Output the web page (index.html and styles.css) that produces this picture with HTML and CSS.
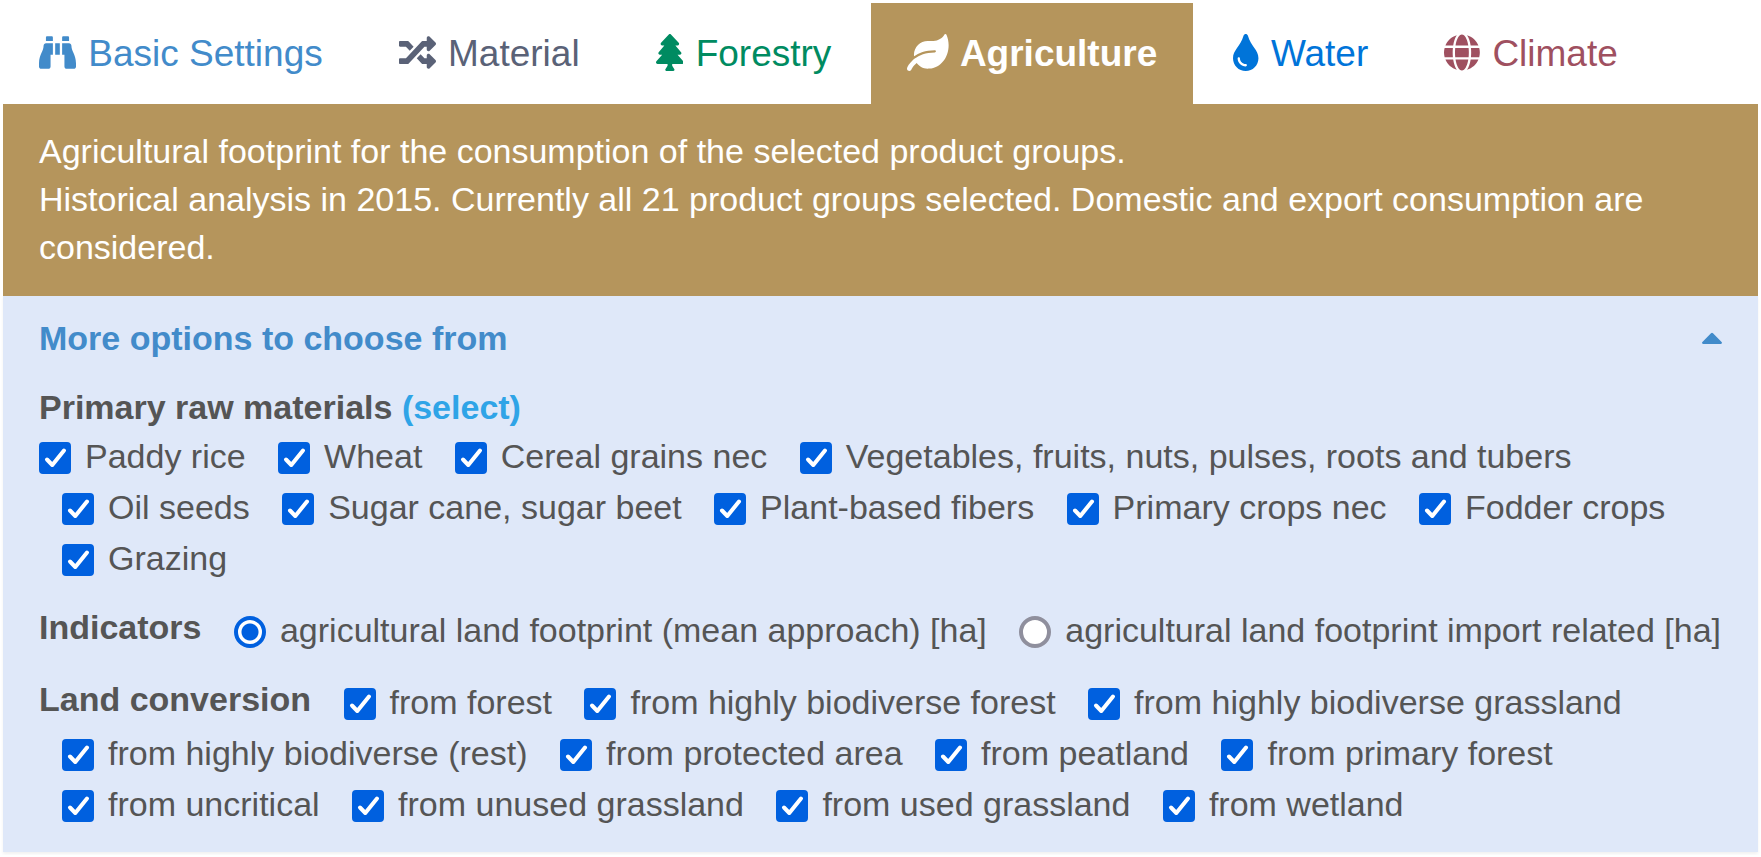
FILE: index.html
```html
<!DOCTYPE html>
<html lang="en">
<head>
<meta charset="utf-8">
<title>Agriculture footprint</title>
<link rel="stylesheet" href="styles.css">
</head>
<body>
<main class="card">
  <nav class="tabs" aria-label="Footprint categories">
    <a class="tab tab-basic" href="#basic"><svg class="icon" viewBox="0 0 512 512" aria-hidden="true"><path d="M416 48c0-8.84-7.16-16-16-16h-64c-8.84 0-16 7.16-16 16v48h96V48zM63.91 159.99C61.4 253.84 3.46 274.22 0 404v44c0 17.67 14.33 32 32 32h96c17.67 0 32-14.33 32-32V288h32V128H95.84c-17.63 0-31.45 14.37-31.93 31.99zm384.18 0c-.48-17.62-14.3-31.99-31.93-31.99H320v160h32v160c0 17.67 14.33 32 32 32h96c17.67 0 32-14.33 32-32v-44c-3.46-129.78-61.4-150.16-63.91-244.01zM176 32h-64c-8.84 0-16 7.16-16 16v48h96V48c0-8.84-7.16-16-16-16zm48 256h64V128h-64v160z"/></svg> Basic Settings</a>
    <a class="tab tab-material" href="#material"><svg class="icon" viewBox="0 0 512 512" aria-hidden="true"><path d="M504.971 359.029c9.373 9.373 9.373 24.569 0 33.941l-80 79.984c-15.01 15.01-40.971 4.49-40.971-16.971V416h-58.785a12.004 12.004 0 0 1-8.773-3.812l-70.556-75.596 53.333-57.143L352 336h32v-39.981c0-21.438 25.943-31.998 40.971-16.971l80 79.981zM12 176h84l52.781 56.551 53.333-57.143-70.556-75.596A11.999 11.999 0 0 0 122.785 96H12c-6.627 0-12 5.373-12 12v56c0 6.627 5.373 12 12 12zm372 0v39.984c0 21.46 25.961 31.98 40.971 16.971l80-79.984c9.373-9.373 9.373-24.569 0-33.941l-80-79.981C409.943 24.021 384 34.582 384 56.019V96h-58.785a12.004 12.004 0 0 0-8.773 3.812L96 336H12c-6.627 0-12 5.373-12 12v56c0 6.627 5.373 12 12 12h110.785c3.326 0 6.503-1.381 8.773-3.812L352 176h32z"/></svg> Material</a>
    <a class="tab tab-forestry" href="#forestry"><svg class="icon" viewBox="0 0 384 512" aria-hidden="true"><path d="M378.31 378.49L298.42 288h30.63c9.01 0 16.98-5 20.78-13.06 3.8-8.04 2.55-17.26-3.28-24.05L268.42 160h28.89c9.1 0 17.3-5.35 20.86-13.61 3.52-8.13 1.86-17.59-4.24-24.08L203.66 4.83c-6.03-6.45-17.28-6.45-23.32 0L70.06 122.31c-6.1 6.49-7.75 15.95-4.24 24.08C69.38 154.65 77.59 160 86.69 160h28.89l-78.14 90.91c-5.81 6.78-7.06 15.99-3.27 24.04C37.97 283 45.93 288 54.95 288h30.63L5.69 378.49c-6 6.79-7.36 16.09-3.56 24.26 3.75 8.05 12 13.25 21.01 13.25H160v24.45l-30.29 48.4c-5.32 10.64 2.42 23.16 14.31 23.16h95.96c11.89 0 19.63-12.52 14.31-23.16L224 440.45V416h136.86c9.01 0 17.26-5.2 21.01-13.25 3.8-8.17 2.44-17.47-3.56-24.26z"/></svg> Forestry</a>
    <a class="tab tab-active" href="#agriculture" aria-current="page"><svg class="icon" viewBox="0 0 576 512" aria-hidden="true"><path d="M546.2 9.7c-5.6-12.5-21.6-13-28.3-1.2C486.9 62.4 431.4 96 368 96h-80C182 96 96 182 96 288c0 7 .8 13.7 1.5 20.5C161.3 262.8 253.4 224 384 224c8.8 0 16 7.2 16 16s-7.2 16-16 16C132.6 256 26 410.1 2.4 468c-6.6 16.3 1.2 34.9 17.5 41.6 16.4 6.8 35-1.1 41.8-17.3 1.5-3.6 20.9-47.9 71.9-90.6 32.4 43.9 94 85.8 174.9 77.2C465.5 467.5 576 326.7 576 154.3c0-50.2-10.8-102.2-29.8-144.6z"/></svg> Agriculture</a>
    <a class="tab tab-water" href="#water"><svg class="icon" viewBox="0 0 352 512" aria-hidden="true"><path d="M205.22 22.09c-7.94-28.78-49.44-30.12-58.44 0C100.01 179.85 0 222.72 0 333.91 0 432.35 78.72 512 176 512s176-79.65 176-178.09c0-111.75-99.79-153.34-146.78-311.82zM176 448c-61.75 0-112-50.25-112-112 0-8.84 7.16-16 16-16s16 7.16 16 16c0 44.11 35.89 80 80 80 8.84 0 16 7.16 16 16s-7.16 16-16 16z"/></svg> Water</a>
    <a class="tab tab-climate" href="#climate"><svg class="icon" viewBox="0 0 496 512" aria-hidden="true"><path d="M336.5 160C322 70.7 287.8 8 248 8s-74 62.7-88.5 152h177zM152 256c0 22.2 1.2 43.5 3.3 64h185.3c2.1-20.5 3.3-41.8 3.3-64s-1.2-43.5-3.3-64H155.3c-2.1 20.5-3.3 41.8-3.3 64zm324.7-96c-28.6-67.9-86.5-120.4-158-141.6 24.4 33.8 41.2 84.7 50 141.6h108zM177.2 18.4C105.8 39.6 47.8 92.1 19.3 160h108c8.7-56.9 25.5-107.8 49.9-141.6zM487.4 192H372.7c2.1 21 3.3 42.5 3.3 64s-1.2 43-3.3 64h114.6c5.5-20.5 8.6-41.8 8.6-64s-3.1-43.5-8.5-64zM120 256c0-21.5 1.2-43 3.3-64H8.6C3.2 212.5 0 233.8 0 256s3.2 43.5 8.6 64h114.6c-2-21-3.2-42.5-3.2-64zm39.5 96c14.5 89.3 48.7 152 88.5 152s74-62.7 88.5-152h-177zm159.3 141.6c71.4-21.2 129.4-73.7 158-141.6h-108c-8.8 56.9-25.6 107.8-50 141.6zM19.3 352c28.6 67.9 86.5 120.4 158 141.6-24.4-33.8-41.2-84.7-50-141.6h-108z"/></svg> Climate</a>
  </nav>

  <p class="summary">Agricultural footprint for the consumption of the selected product groups.<br>Historical analysis in 2015. Currently all 21 product groups selected. Domestic and export consumption are considered.</p>

  <section class="options">
    <button class="toggle" type="button" aria-expanded="true">
      More options to choose from
      <svg class="caret" viewBox="0 0 20 12" aria-hidden="true"><path d="M1.2 12h17.6c1.1 0 1.6-1.3.8-2.1L11 1.300Q10 .2 9 1.300L.4 9.900C-.4 10.700.1 12 1.200 12z"/></svg>
    </button>

    <div class="group" role="group" aria-labelledby="materials-title">
      <h2 class="title" id="materials-title">Primary raw materials <a class="select" href="#select">(select)</a></h2>
      <div class="choices choices-flush">
        <label class="choice"><input class="box" type="checkbox" checked>Paddy rice</label>
        <label class="choice"><input class="box" type="checkbox" checked>Wheat</label>
        <label class="choice"><input class="box" type="checkbox" checked>Cereal grains nec</label>
        <label class="choice"><input class="box" type="checkbox" checked>Vegetables, fruits, nuts, pulses, roots and tubers</label>
        <label class="choice"><input class="box" type="checkbox" checked>Oil seeds</label>
        <label class="choice"><input class="box" type="checkbox" checked>Sugar cane, sugar beet</label>
        <label class="choice"><input class="box" type="checkbox" checked>Plant-based fibers</label>
        <label class="choice"><input class="box" type="checkbox" checked>Primary crops nec</label>
        <label class="choice"><input class="box" type="checkbox" checked>Fodder crops</label>
        <label class="choice"><input class="box" type="checkbox" checked>Grazing</label>
      </div>
    </div>

    <div class="group choices" role="radiogroup" aria-labelledby="indicators-title">
      <h2 class="title title-inline" id="indicators-title">Indicators</h2>
      <label class="choice"><input class="box radio" type="radio" name="indicator" checked>agricultural land footprint (mean approach) [ha]</label>
      <label class="choice"><input class="box radio" type="radio" name="indicator">agricultural land footprint import related [ha]</label>
    </div>

    <div class="group choices" role="group" aria-labelledby="conversion-title">
      <h2 class="title title-inline" id="conversion-title">Land conversion</h2>
      <label class="choice"><input class="box" type="checkbox" checked>from forest</label>
      <label class="choice"><input class="box" type="checkbox" checked>from highly biodiverse forest</label>
      <label class="choice"><input class="box" type="checkbox" checked>from highly biodiverse grassland</label>
      <label class="choice"><input class="box" type="checkbox" checked>from highly biodiverse (rest)</label>
      <label class="choice"><input class="box" type="checkbox" checked>from protected area</label>
      <label class="choice"><input class="box" type="checkbox" checked>from peatland</label>
      <label class="choice"><input class="box" type="checkbox" checked>from primary forest</label>
      <label class="choice"><input class="box" type="checkbox" checked>from uncritical</label>
      <label class="choice"><input class="box" type="checkbox" checked>from unused grassland</label>
      <label class="choice"><input class="box" type="checkbox" checked>from used grassland</label>
      <label class="choice"><input class="box" type="checkbox" checked>from wetland</label>
    </div>
  </section>
</main>
</body>
</html>
```
FILE: styles.css
```css
* {
  box-sizing: border-box;
}

body {
  margin: 0;
  padding: 3px;
  background: #fff;
  color: #555;
  font: 34px/48px "Liberation Sans", Arial, sans-serif;
}

.tabs {
  display: flex;
  flex-wrap: wrap;
  gap: 4px;
}

.tab {
  padding: 24px 36px;
  font-size: 37px;
  line-height: 53px;
  white-space: nowrap;
  text-decoration: none;
}

.icon {
  height: 37px;
  margin-right: 2px;
  vertical-align: -5px;
  fill: currentColor;
}

.tab-basic { color: #428bca; }
.tab-material { color: #5a6277; }
.tab-forestry { color: #008b61; }
.tab-water { color: #0074d9; }
.tab-climate { color: #9f5060; }

.tab-active {
  background: #b5955c;
  color: #fff;
  font-weight: bold;
}

.summary {
  margin: 0;
  padding: 23px 36px 25px;
  background: #b5955c;
  color: #fff;
}

.options {
  display: flex;
  flex-direction: column;
  gap: 21px;
  padding: 18px 36px 22px;
  background: #dfe8f9;
  box-shadow: 0 2px 3px rgba(0, 0, 0, 0.06);
}

.toggle {
  display: flex;
  align-items: center;
  justify-content: space-between;
  width: 100%;
  padding: 0;
  border: 0;
  background: none;
  color: #428bca;
  font: inherit;
  font-weight: bold;
  text-align: left;
}

.caret {
  width: 20px;
  height: 12px;
  fill: currentColor;
}

.title {
  margin: 0;
  font-size: 34px;
  font-weight: bold;
}

.title-inline {
  display: inline-block;
  line-height: 34px;
  vertical-align: 3px;
}

.select {
  color: #2fa4e7;
  text-decoration: none;
}

.choices {
  line-height: 51px;
}

.choice {
  display: inline-block;
  margin-left: 23px;
  white-space: nowrap;
}

.choices-flush .choice:first-child {
  margin-left: 0;
}

.box {
  appearance: none;
  width: 32px;
  height: 32px;
  margin: 0 14px 0 0;
  border: 4px solid #8f8f9d;
  border-radius: 4px;
  background: #fff;
  vertical-align: -6px;
}

.box:checked {
  border-color: #0060df;
  background: #0060df url("data:image/svg+xml,%3Csvg xmlns='http://www.w3.org/2000/svg' viewBox='0 0 32 32'%3E%3Cpath d='M8 17.500L13.300 23 25 8.500' fill='none' stroke='%23fff' stroke-width='4' stroke-linecap='round' stroke-linejoin='round'/%3E%3C/svg%3E") center / 32px 32px border-box;
}

.box.radio {
  border-radius: 50%;
}

.radio:checked {
  background: radial-gradient(circle, #0060df 0 8px, #fff 9px);
}
```
